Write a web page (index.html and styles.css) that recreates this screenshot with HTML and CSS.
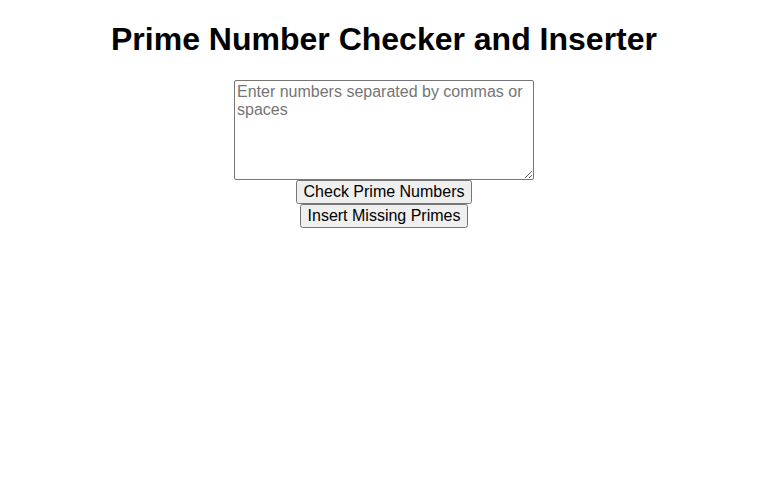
FILE: index.html
```html
<!DOCTYPE html>
<html>
<head>
<meta charset="utf-8">
<link rel="stylesheet" href="styles.css">
</head>
<body>
<h1 class="title">Prime Number Checker and Inserter</h1>
<textarea class="numbers" placeholder="Enter numbers separated by commas or spaces"></textarea>
<button class="action">Check Prime Numbers</button>
<button class="action">Insert Missing Primes</button>
</body>
</html>
```
FILE: styles.css
```css
body {
  margin: 0 8px 8px;
  font-family: "Liberation Sans", Arial, sans-serif;
  text-align: center;
  background: #fff;
}
.title {
  font-size: 32px;
  font-weight: bold;
  margin: 21.44px 0;
}
.numbers {
  display: block;
  margin: 0 auto;
  box-sizing: border-box;
  width: 300px;
  height: 100px;
  font-family: "Liberation Sans", Arial, sans-serif;
  font-size: 16px;
  padding: 2px;
  border: 1px solid #767676;
  border-radius: 2px;
}
.numbers::placeholder {
  color: #757575;
}
.action {
  display: block;
  margin: 0 auto;
  font-family: "Liberation Sans", Arial, sans-serif;
  font-size: 16px;
  color: #000;
}
```
